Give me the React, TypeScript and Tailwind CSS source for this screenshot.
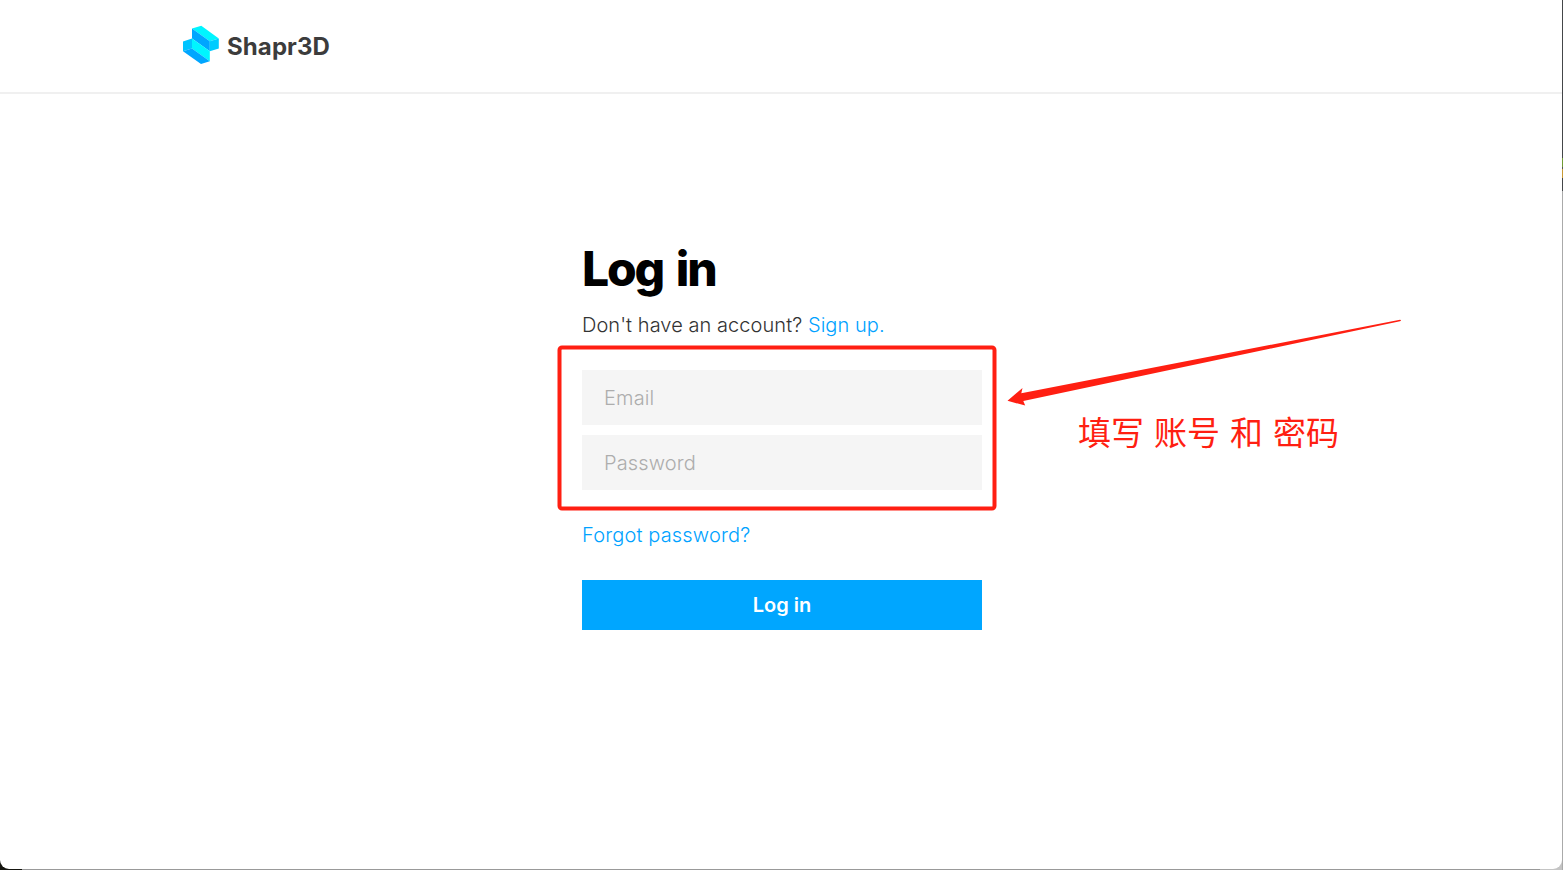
function LogoMark() {
  return (
    <svg className="block h-[40px] w-[38px]" viewBox="182 25 38 40" aria-hidden="true">
      <path d="M192 28.4 201.3 25.8 218.8 38.4 209.8 41.2Z" fill="#00f5ff" />
      <path d="M192 28.4 209.8 41.2V51.3L192 38.6Z" fill="#00a6ff" />
      <path d="M209.8 41.2 218.8 38.4V48.4L209.8 51.3Z" fill="#00ccff" />
      <path d="M183 41.5 192 38.6V48.4L183 51.2Z" fill="#00c4ff" />
      <path d="M192 38.6 209.8 51.3V61.3L192 48.5Z" fill="#00f5ff" />
      <path d="M183 51.2 192 48.4 209.8 61.3 201 64Z" fill="#00a6ff" />
    </svg>
  );
}

function Header() {
  return (
    <header className="flex h-[94px] shrink-0 items-start border-b-2 border-[#f0f0f0] pl-[182px] pt-[25px]">
      <LogoMark />
      <span className="ml-[7px] mt-[2px] text-[24px] font-bold leading-[40px] tracking-[0.1px] text-[#3c3c3c]">
        Shapr3D
      </span>
    </header>
  );
}

function LoginForm() {
  const field =
    "block h-[55px] w-full bg-[#f5f5f5] px-[22px] text-[20px] font-light tracking-[0.14px] text-[#333] outline-none placeholder:text-[#adadad] placeholder:opacity-100";
  return (
    <form className="ml-[582px] mt-[145px] flex w-[400px] flex-col">
      <h1 className="h-[60px] whitespace-nowrap text-[48px] font-extrabold leading-[60px] tracking-[-2.2px] text-black [word-spacing:4.5px]">
        Log in
      </h1>
      <p className="mt-[11px] h-[30px] whitespace-nowrap text-[20px] font-light leading-[30px] tracking-[0.06px] text-[#333]">
        Don't have an account? <a className="text-[#00a2ff]">Sign up.</a>
      </p>
      <div className="mt-[30px] flex flex-col gap-[10px]">
        <input className={field} type="email" placeholder="Email" />
        <input className={field} type="password" placeholder="Password" />
      </div>
      <a className="mt-[30px] h-[30px] text-[20px] font-light leading-[30px] tracking-[0.16px] text-[#00a2ff]">
        Forgot password?
      </a>
      <button
        type="button"
        className="mt-[30px] h-[50px] bg-[#00a6ff] text-[20px] font-semibold leading-[50px] text-white"
      >
        Log in
      </button>
    </form>
  );
}

function Annotations() {
  return (
    <div className="pointer-events-none absolute inset-0">
      <svg className="absolute left-[550px] top-[310px]" width="860" height="210" viewBox="550 310 860 210" aria-hidden="true">
        <rect x="559.5" y="347.5" width="435" height="161" rx="2.5" fill="none" stroke="#ff1f12" strokeWidth="4" />
        <path d="M1007.5 400.8 1022.5 388 1021.3 393.2 1400 319.8Q1402 320.4 1400 321.2L1023.3 401 1025.2 405.6Z" fill="#ff1f12" />
      </svg>
      <span className="absolute left-[1078px] top-[406px] whitespace-nowrap font-['Noto_Sans_CJK_SC',sans-serif] text-[33px] font-normal leading-[50px] text-[#ff1f12] [word-spacing:2.6px]">
        填写 账号 和 密码
      </span>
    </div>
  );
}

export default function App() {
  return (
    <div className="flex h-[870px] w-[1563px] overflow-hidden bg-[linear-gradient(to_right,#15150f_22px,#999_22px,#999_1540px,#c4c4c4_1540px)] font-[Inter,sans-serif]">
      <main className="relative flex h-[869px] w-[1562px] flex-col overflow-hidden rounded-b-[9px] bg-white">
        <Header />
        <LoginForm />
        <Annotations />
      </main>
      <div className="flex w-px flex-col">
        <div className="h-[158px] bg-[#444649]" />
        <div className="h-[9px] bg-[#719b35]" />
        <div className="h-[2px] bg-[#555]" />
        <div className="h-[9px] bg-[#c89a35]" />
        <div className="h-[13px] bg-[#444649]" />
        <div className="grow bg-[#aaa]" />
      </div>
    </div>
  );
}
